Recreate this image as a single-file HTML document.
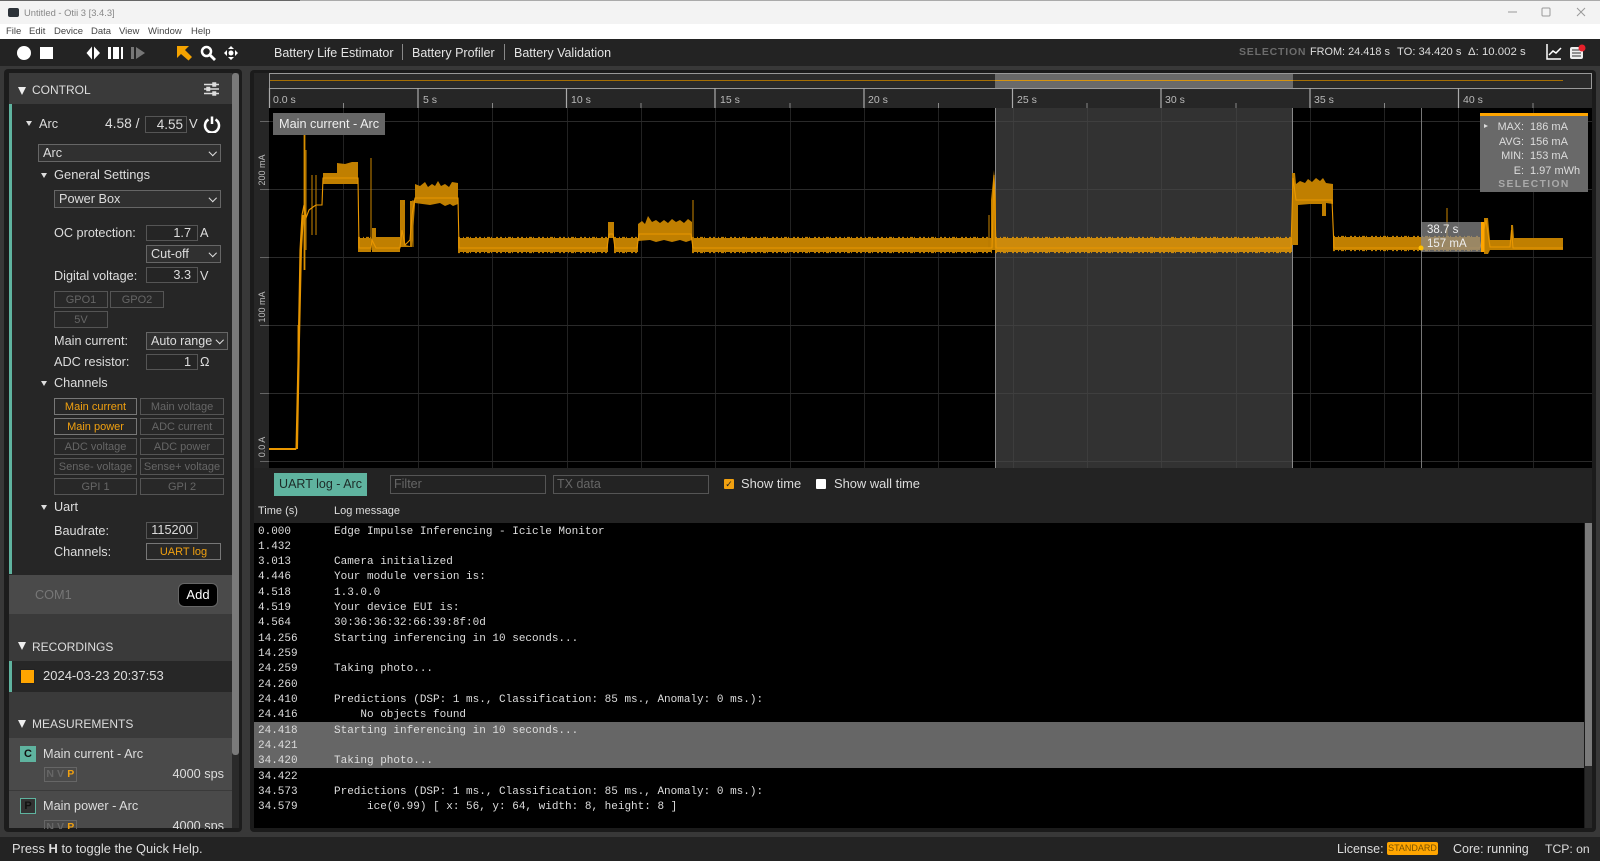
<!DOCTYPE html>
<html><head><meta charset="utf-8"><title>Untitled - Otii 3 [3.4.3]</title>
<style>
*{box-sizing:border-box}
html{background:#383838}
html,body{margin:0;padding:0;width:1600px;height:861px;overflow:hidden;font-family:"Liberation Sans",sans-serif;color:#ddd}
body{position:relative;background:#383838;filter:blur(.3px)}
.a{position:absolute}
.t{position:absolute;white-space:nowrap;line-height:16px;font-size:12.7px}
.b{position:absolute;border:1px solid #555;background:#252525;color:#ddd;font-size:12.7px;line-height:14px;text-align:right;padding-right:6px;white-space:nowrap}
.s{position:absolute;border:1px solid #666;background:#303030;color:#ddd;font-size:12.7px;line-height:16px;padding-left:4px;white-space:nowrap}
.s:after{content:"";position:absolute;right:5px;top:4px;width:4.5px;height:4.5px;border-right:1.5px solid #ddd;border-bottom:1.5px solid #ddd;transform:rotate(45deg)}
.k{position:absolute;border:1px solid #555;background:#282828;color:#666;font-size:11px;line-height:16px;text-align:center;white-space:nowrap}
.k.on{color:#f0a010;border-color:#777}
.tr{position:absolute;width:0;height:0;border-left:3.5px solid transparent;border-right:3.5px solid transparent;border-top:5px solid #ddd}
.tb{position:absolute;width:0;height:0;border-left:4.5px solid transparent;border-right:4.5px solid transparent;border-top:8px solid #eee}
.m{position:absolute;font-family:"Liberation Mono",monospace;font-size:11px;line-height:15px;color:#ddd;white-space:pre}
.i{position:absolute;font-size:11px;line-height:14px;color:#ddd;white-space:nowrap}
.nvp{position:absolute;width:33px;height:15px;border:1px solid #666;font-size:10.5px;font-weight:bold;line-height:13px;color:#666;white-space:nowrap}
.nvp span{display:inline-block;width:10.300px;text-align:center}
.nvp span:last-child{color:#f0a010}
</style></head><body>

<!-- title + menu -->
<div class="a" style="left:0;top:0;width:1600px;height:24px;background:#f3f3f3"></div>
<div class="a" style="left:0;top:0;width:300px;height:1px;background:#666"></div>
<div class="a" style="left:300px;top:0;width:1300px;height:1px;background:#aaa"></div>
<div class="a" style="left:0;top:24px;width:1600px;height:15px;background:#fff"></div>
<div class="a" style="left:8px;top:8px;width:11px;height:9px;background:#2c3238;border-radius:2px"></div>
<div class="t" style="left:24px;top:5px;font-size:9.4px;color:#888">Untitled - Otii 3 [3.4.3]</div>
<div class="t" style="left:6px;top:24px;font-size:9.5px;color:#444">File</div>
<div class="t" style="left:29px;top:24px;font-size:9.5px;color:#444">Edit</div>
<div class="t" style="left:54px;top:24px;font-size:9.5px;color:#444">Device</div>
<div class="t" style="left:91px;top:24px;font-size:9.5px;color:#444">Data</div>
<div class="t" style="left:119px;top:24px;font-size:9.5px;color:#444">View</div>
<div class="t" style="left:148px;top:24px;font-size:9.5px;color:#444">Window</div>
<div class="t" style="left:191px;top:24px;font-size:9.5px;color:#444">Help</div>
<svg class="a" style="left:1505px;top:4px" width="90" height="16" fill="none" stroke="#999" stroke-width="1"><path d="M3 8h9"/><rect x="37" y="4" width="8" height="8" rx="1"/><path d="M72 4l8 8M80 4l-8 8"/></svg>

<!-- toolbar -->
<div class="a" style="left:0;top:39px;width:1600px;height:27px;background:#232323"></div>
<svg class="a" style="left:0;top:39px" width="250" height="27">
<circle cx="24" cy="14" r="7" fill="#fff"/>
<rect x="40" y="8" width="13" height="12" fill="#fff"/>
<path d="M92 7.500L86.500 14L92 20.500ZM94 7.500L100 14L94 20.500Z" fill="#fff"/>
<path d="M108 8h3v12h-3zM113 8h6v12h-6zM121 8h2v12h-2z" fill="#fff"/>
<path d="M131 8h3v12h-3zM136 8l9 6l-9 6z" fill="#777"/>
<path d="M177 7L189 7L185 11L192 18L188.500 21.500L181 15L177 19Z" fill="#f5a300"/>
<circle cx="206.500" cy="12.500" r="4.500" fill="none" stroke="#fff" stroke-width="2.500"/>
<path d="M210 16l5 5" stroke="#fff" stroke-width="2.800"/>
<circle cx="231" cy="14" r="2.500" fill="#fff"/>
<path d="M231 7l-3 3h6zM231 21l-3-3h6zM224 14l3-3v6zM238 14l-3-3v6z" fill="#fff"/>
</svg>
<div class="t" style="left:274px;top:45px;font-size:12.500px;color:#e4e4e4">Battery Life Estimator</div>
<div class="a" style="left:402px;top:44px;width:1px;height:16px;background:#888"></div>
<div class="t" style="left:412px;top:45px;font-size:12.500px;color:#e4e4e4">Battery Profiler</div>
<div class="a" style="left:504px;top:44px;width:1px;height:16px;background:#888"></div>
<div class="t" style="left:514px;top:45px;font-size:12.500px;color:#e4e4e4">Battery Validation</div>
<div class="t" style="left:1239px;top:44px;font-size:10.500px;font-weight:bold;letter-spacing:.8px;color:#6c6c6c">SELECTION</div>
<div class="t" style="left:1310px;top:44px;font-size:10.900px;color:#ddd">FROM: 24.418 s</div>
<div class="t" style="left:1397px;top:44px;font-size:11.200px;color:#ddd">TO: 34.420 s</div>
<div class="t" style="left:1468px;top:44px;font-size:11.400px;color:#ddd">Δ: 10.002 s</div>
<svg class="a" style="left:1544px;top:42px" width="46" height="20" fill="none" stroke="#fff" stroke-width="1.500">
<path d="M3 2v15h14M5 13l4-4l3 2l5-5"/>
<rect x="26" y="5" width="13" height="12" rx="2" fill="#eee" stroke="none"/>
<path d="M28 8h9M28 11h9M28 14h9" stroke="#333" stroke-width="1"/>
<circle cx="38" cy="6" r="3.500" fill="#e8202a" stroke="none"/>
</svg>

<!-- left panel -->
<div class="a" style="left:4px;top:69px;width:238px;height:763px;background:#1c1c1c;border-radius:4px"></div>
<div class="a" style="left:9px;top:73px;width:223px;height:755px;background:#3a3a3a"></div>
<div class="a" style="left:232px;top:73px;width:7px;height:755px;background:#2a2a2a"></div>
<div class="a" style="left:232px;top:73px;width:7px;height:682px;background:#7a7a7a;border-radius:3px"></div>
<div class="a" style="left:9px;top:104px;width:223px;height:471px;background:#262626"></div>
<div class="a" style="left:9px;top:104px;width:3px;height:470px;background:#5fb39f"></div>

<div class="tb" style="left:18px;top:87px"></div>
<div class="t" style="left:32px;top:82px;font-size:12px">CONTROL</div>
<svg class="a" style="left:203px;top:82px" width="17" height="14" stroke="#ddd" stroke-width="1.500" fill="#ddd"><path d="M1 2.500h15M1 7h15M1 11.500h15"/><rect x="10" y="1" width="2.500" height="3"/><rect x="4" y="5.500" width="2.500" height="3"/><rect x="10" y="10" width="2.500" height="3"/></svg>

<div class="tr" style="left:26px;top:121px"></div>
<div class="t" style="left:39px;top:116px">Arc</div>
<div class="t" style="left:105px;top:116px;font-size:13.800px">4.58 /</div>
<div class="b" style="left:145px;top:116px;width:42px;height:17px;font-size:13.500px;padding-right:3px;line-height:16px">4.55</div>
<div class="t" style="left:189px;top:116px;font-size:13px">V</div>
<svg class="a" style="left:203px;top:115px" width="18" height="18" fill="none" stroke="#fff" stroke-width="2.500"><path d="M5.500 4.500a7 7 0 1 0 7 0"/><path d="M9 1.500v7.500"/></svg>

<div class="s" style="left:38px;top:144px;width:183px;height:18px">Arc</div>
<div class="tr" style="left:41px;top:173px"></div>
<div class="t" style="left:54px;top:167px;font-size:12.900px">General Settings</div>
<div class="s" style="left:54px;top:190px;width:167px;height:18px">Power Box</div>

<div class="t" style="left:54px;top:225px">OC protection:</div>
<div class="b" style="left:146px;top:225px;width:52px;height:16px">1.7</div>
<div class="t" style="left:200px;top:225px">A</div>
<div class="s" style="left:146px;top:245px;width:75px;height:18px">Cut-off</div>
<div class="t" style="left:54px;top:268px">Digital voltage:</div>
<div class="b" style="left:146px;top:267px;width:52px;height:16px">3.3</div>
<div class="t" style="left:200px;top:268px">V</div>

<div class="k" style="left:54px;top:291px;width:54px;height:17px">GPO1</div>
<div class="k" style="left:110px;top:291px;width:54px;height:17px">GPO2</div>
<div class="k" style="left:54px;top:311px;width:54px;height:17px">5V</div>

<div class="t" style="left:54px;top:333px">Main current:</div>
<div class="s" style="left:146px;top:332px;width:82px;height:18px;font-size:12.500px;padding-left:4px">Auto range</div>
<div class="t" style="left:54px;top:354px">ADC resistor:</div>
<div class="b" style="left:146px;top:354px;width:52px;height:16px">1</div>
<div class="t" style="left:200px;top:354px">Ω</div>
<div class="tr" style="left:41px;top:381px"></div>
<div class="t" style="left:54px;top:375px">Channels</div>

<div class="k on" style="left:54px;top:398px;width:83px;height:17px">Main current</div>
<div class="k" style="left:140px;top:398px;width:84px;height:17px">Main voltage</div>
<div class="k on" style="left:54px;top:418px;width:83px;height:17px">Main power</div>
<div class="k" style="left:140px;top:418px;width:84px;height:17px">ADC current</div>
<div class="k" style="left:54px;top:438px;width:83px;height:17px">ADC voltage</div>
<div class="k" style="left:140px;top:438px;width:84px;height:17px">ADC power</div>
<div class="k" style="left:54px;top:458px;width:83px;height:17px">Sense- voltage</div>
<div class="k" style="left:140px;top:458px;width:84px;height:17px">Sense+ voltage</div>
<div class="k" style="left:54px;top:478px;width:83px;height:17px">GPI 1</div>
<div class="k" style="left:140px;top:478px;width:84px;height:17px">GPI 2</div>

<div class="tr" style="left:41px;top:505px"></div>
<div class="t" style="left:54px;top:499px">Uart</div>
<div class="t" style="left:54px;top:523px">Baudrate:</div>
<div class="b" style="left:146px;top:522px;width:52px;height:17px;line-height:15px;text-align:center;padding:0">115200</div>
<div class="t" style="left:54px;top:544px">Channels:</div>
<div class="k on" style="left:146px;top:543px;width:75px;height:17px">UART log</div>

<div class="a" style="left:9px;top:575px;width:223px;height:39px;background:#4a4a4a"></div>
<div class="t" style="left:35px;top:587px;color:#777">COM1</div>
<div class="a" style="left:178px;top:583px;width:40px;height:24px;background:#000;border:1px solid #666;border-radius:6px;color:#fff;font-size:13px;line-height:22px;text-align:center">Add</div>

<div class="tb" style="left:18px;top:642px"></div>
<div class="t" style="left:32px;top:639px;font-size:12px">RECORDINGS</div>
<div class="a" style="left:9px;top:661px;width:223px;height:31px;background:#272727"></div>
<div class="a" style="left:9px;top:661px;width:3px;height:31px;background:#5fb39f"></div>
<div class="a" style="left:20px;top:669px;width:15px;height:15px;background:#ffa500;border:1px solid #222"></div>
<div class="t" style="left:43px;top:668px;font-size:13px">2024-03-23 20:37:53</div>

<div class="tb" style="left:18px;top:720px"></div>
<div class="t" style="left:32px;top:716px;font-size:12px">MEASUREMENTS</div>
<div class="a" style="left:9px;top:738px;width:223px;height:90px;background:#4a4a4a"></div>
<div class="a" style="left:9px;top:790px;width:223px;height:1px;background:#3a3a3a"></div>
<div class="a" style="left:20px;top:746px;width:16px;height:16px;background:#5fb39f;color:#111;font-weight:bold;font-size:11px;line-height:16px;text-align:center">C</div>
<div class="t" style="left:43px;top:746px">Main current - Arc</div>
<div class="nvp" style="left:44px;top:767px"><span>N</span><span>V</span><span>P</span></div>
<div class="t" style="left:165px;top:766px;width:59px;text-align:right">4000 sps</div>
<div class="a" style="left:20px;top:798px;width:16px;height:16px;background:#333;border:1px solid #5fb39f;color:#111;font-weight:bold;font-size:11px;line-height:14px;text-align:center">P</div>
<div class="t" style="left:43px;top:798px">Main power - Arc</div>
<div class="a" style="left:9px;top:820px;width:223px;height:9px;overflow:hidden">
<div class="nvp" style="left:35px;top:0"><span>N</span><span>V</span><span>P</span></div>
<div class="t" style="left:156px;top:-2px;width:59px;text-align:right">4000 sps</div>
</div>

<!-- right panel -->
<div class="a" style="left:250px;top:70px;width:1346px;height:762px;background:#1b1b1b;border-radius:4px"></div>
<div class="a" style="left:254px;top:73px;width:1338px;height:395px;background:#262626"></div>
<div class="a" style="left:269px;top:73px;width:1323px;height:16px;background:#2a2a2a;border:1px solid #999"></div>
<div class="a" style="left:995px;top:74px;width:298px;height:14px;background:#6a6a6a"></div>
<div class="a" style="left:270px;top:79.500px;width:1293px;height:1.500px;background:#a56f05"></div>
<div class="a" style="left:995px;top:79.500px;width:298px;height:1.500px;background:#d69410"></div>

<svg class="a" style="left:0;top:0" width="1600" height="861">
<rect x="269" y="108" width="1323" height="360" fill="#000"/>
<g stroke="#222" stroke-width="1">
<path d="M343.500 108V468M418.500 108V468M492.500 108V468M567.500 108V468M641.500 108V468M715.500 108V468M790.500 108V468M864.500 108V468M938.500 108V468M1013.500 108V468M1087.500 108V468M1161.500 108V468M1236.500 108V468M1310.500 108V468M1384.500 108V468M1458.500 108V468M1533.500 108V468"/>
<path d="M269 121.500H1592M269 189.500H1592M269 257.500H1592M269 325.500H1592M269 393.500H1592M269 461.500H1592" stroke="#2a2a2a"/>
</g>
<rect x="995" y="108" width="298" height="360" fill="#4a4a4a" fill-opacity=".68"/>
<path d="M260 121.500h9M260 189.500h9M260 257.500h9M260 325.500h9M260 393.500h9M260 461.500h9" stroke="#666"/>
<path d="M995.500 108V468M1292.500 108V468" stroke="#888"/>
<path d="M1421.500 108V468" stroke="#777"/>
<g stroke="#aaa" stroke-width="1.200">
<path d="M269.500 88V108M418 88V108M566.500 88V108M715 88V108M864 88V108M1012.500 88V108M1161 88V108M1310 88V108M1458.500 88V108"/>
</g>
<path d="M343.500 103V108M492.500 103V108M641 103V108M790 103V108M938.500 103V108M1087 103V108M1236 103V108M1384.500 103V108M1533 103V108" stroke="#888" stroke-width="1"/>

<g fill="#c07f00">
<path d="M323 173H337V163L345 164L352 162L358 162V184H323Z"/>
<rect x="358" y="238" width="13" height="14"/>
<path d="M372 252V228H376V237L388 237L400 237V252Z"/>
<path d="M400 247V200H405V245L410 246V201H415V205L412 247Z"/>
<path d="M415 184L420 186L425 182L428 187L432 184L435 186L438 181L441 186L445 184L449 187L452 182L458 183V204L453 206L450 204L445 206L440 203L430 205L415 203Z"/>
<rect x="458" y="238" width="150" height="14"/>
<rect x="608" y="222" width="6" height="16"/>
<rect x="614" y="238" width="24" height="14"/>
<path d="M638 224L642 221L645 224L648 216L652 222L656 220L660 223L664 220L668 223L672 219L676 222L680 220L684 223L688 219L692 222V240L686 242L680 240L672 242L664 240L656 242L650 240L638 241Z"/>
<rect x="692" y="238" width="300" height="14"/>
<path d="M991 250V200L994 170L996 200V250Z"/>
<rect x="1333" y="237" width="147" height="13"/>
<path d="M1292 245V173L1295 173L1296 184L1300 181L1305 183L1308 179L1312 182L1316 178L1320 181L1323 178L1326 183L1333 184V204L1326 203L1326 216L1322 216L1322 204L1310 204L1298 205V245Z"/>
<path d="M1484 254V218H1488L1490 240H1511V225L1513 225L1514 238H1563V250H1490L1488 254Z"/>
</g>
<rect x="995" y="238" width="297" height="14" fill="#cc8a0c"/>
<g fill="none" stroke-dasharray="2 3 1 2 3 1 1 4 2 2" stroke-width="1.200">
<path d="M458 237.500H608M614 237.500H638M692 237.500H992M358 237.500H371M1333 236.500H1480" stroke="#c07f00"/>
<path d="M458 252.500H608M614 252.500H638M692 252.500H992M1333 250.500H1480" stroke="#c07f00"/>
<path d="M995 237.500H1292M995 252.500H1292" stroke="#cc8a0c"/>
</g>
<g stroke="#b87a00" stroke-width="1.100" fill="none">
<path d="M306 150V250M312 175V235M316 175V235M371 158V250M693 200V240M1447 208V236M298 325V380M989 215V248M402 200V247M404 205V247M411 205V247M413 200V247"/>
</g>
<path d="M304.500 130V270" stroke="#d88f00" stroke-width="1.800" fill="none"/>
<path d="M297 449L299 340L301 250L303 215" stroke="#e69500" stroke-width="2" fill="none"/>
<path d="M269 449H296L298 360L300 250L302 215L304 205L306 218L309 210L313 207L316 205L322 205L323 178H358L359 248H371L372 240L376 248H400L402 230L405 245L410 240L412 215L415 198H458L459 248H607L609 234H613L615 248H637L639 234H691L693 248H992L994 175L996 248H1291L1293 178L1296 200H1332L1334 248H1480L1486 220L1490 247H1510L1511.500 230L1513 248H1563" fill="none" stroke="#ea9700" stroke-width="1.100"/>
<path d="M269 449H296" stroke="#ea9700" stroke-width="2" fill="none"/>
<rect x="1421" y="222" width="60" height="30" fill="#8a8a8a" fill-opacity=".72"/>
<rect x="1481" y="222" width="3.500" height="30" fill="#ffa500"/>
<circle cx="1421" cy="248" r="2.500" fill="#ffc000"/>
</svg>

<div class="i" style="left:1427px;top:223px;font-size:11.500px;color:#eee">38.7 s</div>
<div class="i" style="left:1427px;top:237px;font-size:11.500px;color:#eee">157 mA</div>

<div class="t" style="left:273px;top:92px;font-size:10.500px;color:#bbb">0.0 s</div>
<div class="t" style="left:423px;top:92px;font-size:10.500px;color:#bbb">5 s</div>
<div class="t" style="left:571px;top:92px;font-size:10.500px;color:#bbb">10 s</div>
<div class="t" style="left:720px;top:92px;font-size:10.500px;color:#bbb">15 s</div>
<div class="t" style="left:868px;top:92px;font-size:10.500px;color:#bbb">20 s</div>
<div class="t" style="left:1017px;top:92px;font-size:10.500px;color:#bbb">25 s</div>
<div class="t" style="left:1165px;top:92px;font-size:10.500px;color:#bbb">30 s</div>
<div class="t" style="left:1314px;top:92px;font-size:10.500px;color:#bbb">35 s</div>
<div class="t" style="left:1463px;top:92px;font-size:10.500px;color:#bbb">40 s</div>

<div class="t" style="left:242px;top:162px;width:40px;text-align:center;font-size:9px;color:#bbb;transform:rotate(-90deg)">200 mA</div>
<div class="t" style="left:242px;top:299px;width:40px;text-align:center;font-size:9px;color:#bbb;transform:rotate(-90deg)">100 mA</div>
<div class="t" style="left:242px;top:439px;width:40px;text-align:center;font-size:9px;color:#bbb;transform:rotate(-90deg)">0.0 A</div>

<div class="a" style="left:273px;top:113px;width:112px;height:22px;background:#666;color:#eee;font-size:12.700px;line-height:23px;padding-left:6px;white-space:nowrap">Main current - Arc</div>

<!-- info box -->
<div class="a" style="left:1480px;top:113px;width:108px;height:79px;background:#696969;border-top:3px solid #ffa500"></div>
<div class="tr" style="left:1484px;top:124px;border-left:4px solid #ddd;border-right:0;border-top:2.500px solid transparent;border-bottom:2.500px solid transparent"></div>
<div class="i" style="left:1490px;top:120px;width:34px;text-align:right;font-size:10.800px">MAX:</div><div class="i" style="left:1530px;top:120px">186 mA</div>
<div class="i" style="left:1490px;top:135px;width:34px;text-align:right;font-size:10.800px">AVG:</div><div class="i" style="left:1530px;top:135px">156 mA</div>
<div class="i" style="left:1490px;top:149px;width:34px;text-align:right;font-size:10.800px">MIN:</div><div class="i" style="left:1530px;top:149px">153 mA</div>
<div class="i" style="left:1490px;top:164px;width:34px;text-align:right;font-size:10.800px">E:</div><div class="i" style="left:1530px;top:164px">1.97 mWh</div>
<div class="i" style="left:1480px;top:178px;width:108px;text-align:center;font-size:10.300px;font-weight:bold;letter-spacing:1.400px;color:#aaa">SELECTION</div>

<!-- log controls -->
<div class="a" style="left:254px;top:468px;width:1338px;height:55px;background:#232323"></div>
<div class="a" style="left:274px;top:473px;width:93px;height:23px;background:#5fb39f;color:#1d2b28;font-size:12.500px;line-height:23px;text-align:center;white-space:nowrap">UART log - Arc</div>
<div class="a" style="left:390px;top:475px;width:156px;height:19px;border:1px solid #555;color:#666;font-size:12.500px;line-height:17px;padding-left:3px">Filter</div>
<div class="a" style="left:553px;top:475px;width:156px;height:19px;border:1px solid #555;color:#666;font-size:12.500px;line-height:17px;padding-left:3px">TX data</div>
<div class="a" style="left:724px;top:479px;width:10px;height:10px;background:#f0a010;border-radius:1px;color:#222;font-size:9px;line-height:10px;text-align:center">✓</div>
<div class="t" style="left:741px;top:476px;font-size:12.900px">Show time</div>
<div class="a" style="left:816px;top:479px;width:10px;height:10px;background:#fff;border-radius:1px"></div>
<div class="t" style="left:834px;top:476px;font-size:12.900px">Show wall time</div>
<div class="t" style="left:258px;top:503px;font-size:11px">Time (s)</div>
<div class="t" style="left:334px;top:503px;font-size:11px">Log message</div>

<!-- log -->
<div class="a" style="left:254px;top:523px;width:1330px;height:305px;background:#000"></div>
<div class="a" style="left:254px;top:722px;width:1330px;height:46px;background:#666"></div>
<div class="a" style="left:1585px;top:523px;width:7px;height:305px;background:#2a2a2a"></div>
<div class="a" style="left:1585px;top:523px;width:7px;height:243px;background:#7a7a7a"></div>
<div class="m" style="left:258px;top:524.500px;line-height:15.330px">0.000
1.432
3.013
4.446
4.518
4.519
4.564
14.256
14.259
24.259
24.260
24.410
24.416
24.418
24.421
34.420
34.422
34.573
34.579</div>
<div class="m" style="left:334px;top:524.500px;line-height:15.330px">Edge Impulse Inferencing - Icicle Monitor

Camera initialized
Your module version is:
1.3.0.0
Your device EUI is:
30:36:36:32:66:39:8f:0d
Starting inferencing in 10 seconds...

Taking photo...

Predictions (DSP: 1 ms., Classification: 85 ms., Anomaly: 0 ms.):
    No objects found
Starting inferencing in 10 seconds...

Taking photo...

Predictions (DSP: 1 ms., Classification: 85 ms., Anomaly: 0 ms.):
     ice(0.99) [ x: 56, y: 64, width: 8, height: 8 ]</div>

<!-- status -->
<div class="a" style="left:0;top:837px;width:1600px;height:24px;background:#232323"></div>
<div class="t" style="left:12px;top:841px;font-size:12.900px;color:#ddd">Press <b>H</b> to toggle the Quick Help.</div>
<div class="t" style="left:1337px;top:841px;font-size:12.500px">License:</div>
<div class="a" style="left:1387px;top:842px;width:51px;height:13px;background:#ffa500;border-radius:2px;color:#7a5200;font-size:9px;line-height:13px;text-align:center">STANDARD</div>
<div class="t" style="left:1453px;top:841px;font-size:12.500px">Core: running</div>
<div class="t" style="left:1545px;top:841px;font-size:12.200px">TCP: on</div>
</body></html>
